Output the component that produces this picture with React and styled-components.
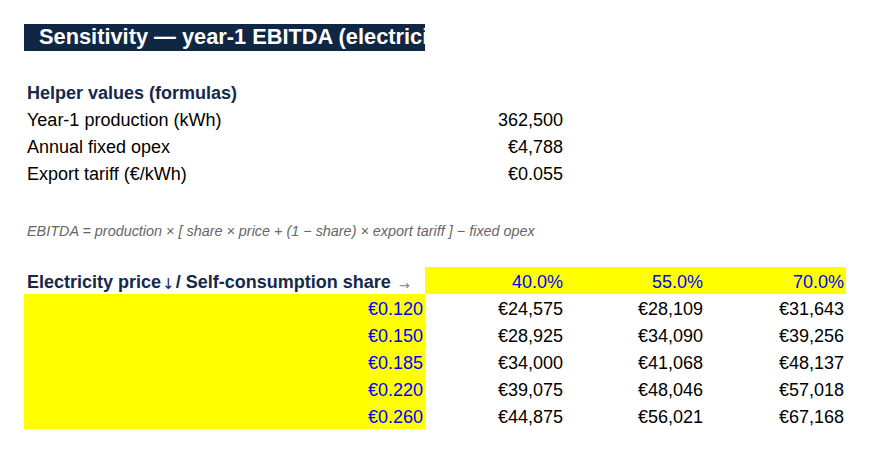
import styled, { createGlobalStyle } from "styled-components";

const GlobalStyle = createGlobalStyle`
  body {
    margin: 0;
    background: #ffffff;
    font-family: "Liberation Sans", Arial, sans-serif;
  }
`;

const Sheet = styled.div`
  padding: 24px 0 0 24px;
  display: grid;
  grid-template-columns: 401px 140px 140px 141px;
  grid-auto-rows: 27px;
  font-size: 18px;
  color: #000;
`;

const Cell = styled.div`
  display: flex;
  align-items: flex-end;
  justify-content: ${(p) => (p.$right ? "flex-end" : "flex-start")};
  padding: 0 2px 1px 3px;
  white-space: nowrap;
  overflow: hidden;
  background: ${(p) => (p.$hl ? "#ffff00" : "transparent")};
  color: ${(p) => (p.$input ? "#0000ff" : "inherit")};
`;

const TitleCell = styled.div`
  display: flex;
  align-items: flex-end;
  padding: 0 0 1px 15px;
  background: #0f2744;
  color: #ffffff;
  font-weight: bold;
  font-size: 21.8px;
  white-space: nowrap;
  overflow: hidden;
`;

const Gap = styled.div`
  grid-column: 1 / -1;
`;

const SectionLabel = styled(Cell)`
  color: #15294a;
  font-weight: bold;
  grid-column: ${(p) => (p.$wide ? "1 / -1" : "auto")};
`;

const Formula = styled(Cell)`
  grid-column: 1 / -1;
  font-style: italic;
  font-size: 14.4px;
  color: #666666;
`;

const Glyph = styled.span`
  font-family: "DejaVu Sans", sans-serif;
  font-weight: normal;
  font-size: 15px;
  margin: 0 1px;
`;

const Arrow = styled.span`
  font-family: "DejaVu Sans", sans-serif;
  font-size: 13px;
  color: #7a8596;
  margin-left: 8px;
  font-weight: normal;
`;

const helpers = [
  ["Year-1 production (kWh)", "362,500"],
  ["Annual fixed opex", "€4,788"],
  ["Export tariff (€/kWh)", "€0.055"],
];

const shares = ["40.0%", "55.0%", "70.0%"];

const grid = [
  ["€0.120", "€24,575", "€28,109", "€31,643"],
  ["€0.150", "€28,925", "€34,090", "€39,256"],
  ["€0.185", "€34,000", "€41,068", "€48,137"],
  ["€0.220", "€39,075", "€48,046", "€57,018"],
  ["€0.260", "€44,875", "€56,021", "€67,168"],
];

export default function App() {
  return (
    <>
      <GlobalStyle />
      <Sheet>
        <TitleCell>Sensitivity — year-1 EBITDA (electricity price × self-consumption share)</TitleCell>
        <Cell />
        <Cell />
        <Cell />
        <Gap />
        <SectionLabel $wide>Helper values (formulas)</SectionLabel>
        {helpers.map(([label, value]) => (
          <>
            <Cell key={label}>{label}</Cell>
            <Cell $right>{value}</Cell>
            <Cell />
            <Cell />
          </>
        ))}
        <Gap />
        <Formula>
          EBITDA = production × [ share × price + (1 − share) × export tariff ] − fixed opex
        </Formula>
        <Gap />
        <SectionLabel>
          Electricity price <Glyph>↓</Glyph> / Self-consumption share<Arrow>→</Arrow>
        </SectionLabel>
        {shares.map((s) => (
          <Cell key={s} $right $hl $input>
            {s}
          </Cell>
        ))}
        {grid.map((row) => (
          <>
            <Cell key={row[0]} $right $hl $input>
              {row[0]}
            </Cell>
            {row.slice(1).map((v, i) => (
              <Cell key={i} $right>
                {v}
              </Cell>
            ))}
          </>
        ))}
      </Sheet>
    </>
  );
}
